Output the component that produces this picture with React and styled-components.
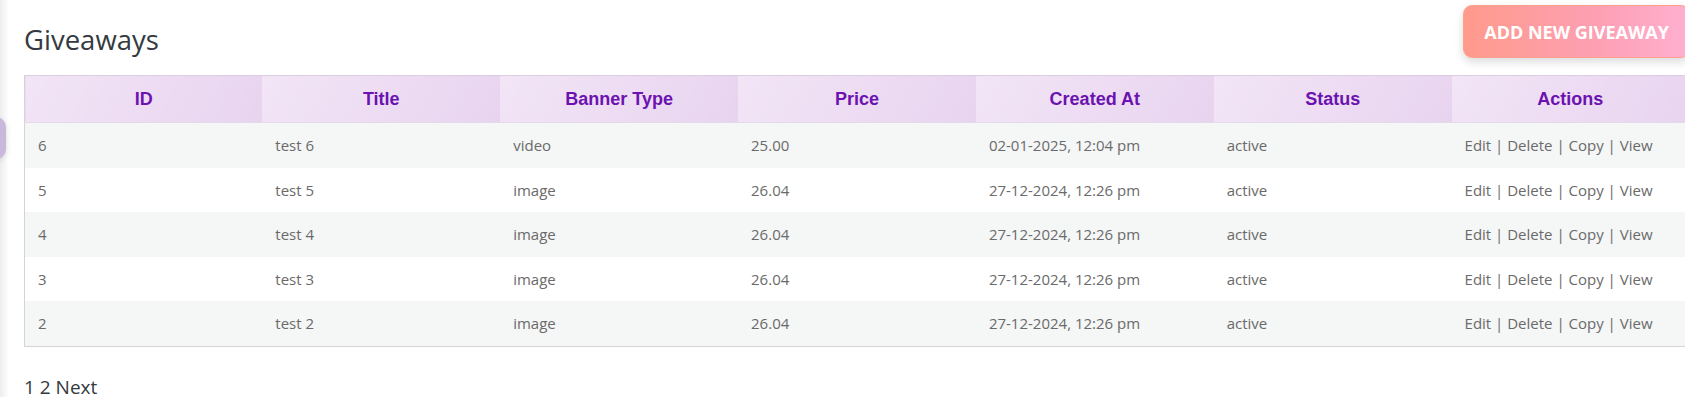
import React from "react";
import styled, { createGlobalStyle } from "styled-components";

const GlobalStyle = createGlobalStyle`
  html, body {
    margin: 0;
    padding: 0;
    background: #fff;
    overflow: hidden;
  }
  body {
    font-family: "Open Sans", "Noto Sans", sans-serif;
  }
`;

const EdgeShadow = styled.div`
  position: fixed;
  left: 0;
  top: 0;
  bottom: 0;
  width: 9px;
  background: linear-gradient(90deg, rgba(0, 0, 0, 0.07), rgba(0, 0, 0, 0));
`;

const SideTab = styled.div`
  position: fixed;
  left: -30px;
  top: 117px;
  width: 36px;
  height: 42px;
  border-radius: 10px;
  background: #c8b8db;
  box-shadow: 0 2px 6px rgba(0, 0, 0, 0.12);
`;

const Page = styled.div`
  width: 1666px;
  padding: 5px 0 0 24px;
`;

const TopBar = styled.div`
  display: flex;
  justify-content: space-between;
  align-items: flex-start;
  height: 70px;
`;

const Title = styled.h1`
  margin: 18px 0 0;
  font-size: 27.5px;
  line-height: 1.2;
  font-weight: 400;
  color: #343a40;
`;

const AddButton = styled.button`
  height: 53px;
  padding: 0 20px;
  border: 1px solid #ffa08e;
  border-radius: 9px;
  background: linear-gradient(90deg, #ff9a8b, #fda0b4 60%, #ffb0d0);
  box-shadow: 0 4px 10px rgba(0, 0, 0, 0.14);
  color: #fff;
  font-family: "Open Sans", sans-serif;
  font-weight: 700;
  font-size: 18px;
  text-transform: uppercase;
  cursor: pointer;
`;

const Table = styled.table`
  width: 1666px;
  table-layout: fixed;
  border-collapse: collapse;
  border: 1px solid #d4d4d4;
`;

const HeadCell = styled.th`
  height: 46px;
  padding: 0 13px;
  background: linear-gradient(120deg, #f2e5f6, #e8d3ef);
  border-top: 1px solid #dacfe0;
  border-bottom: 1px solid #e3dbe7;
  color: #6b12b0;
  font-family: "Liberation Sans", Arial, sans-serif;
  font-weight: 700;
  font-size: 18px;
  text-align: center;
`;

const Row = styled.tr`
  background: ${(p) => (p.$striped ? "#f5f6f6" : "#ffffff")};
`;

const Cell = styled.td`
  height: 44.5px;
  padding: 0 13px;
  color: #6a6a6a;
  font-size: 15px;
  text-align: left;
  white-space: nowrap;
`;

const Pager = styled.div`
  margin-top: 31px;
  font-size: 19px;
  line-height: 1;
  color: #343a40;
`;

const columns = ["ID", "Title", "Banner Type", "Price", "Created At", "Status", "Actions"];

const rows = [
  { id: 6, title: "test 6", type: "video", price: "25.00", created: "02-01-2025, 12:04 pm" },
  { id: 5, title: "test 5", type: "image", price: "26.04", created: "27-12-2024, 12:26 pm" },
  { id: 4, title: "test 4", type: "image", price: "26.04", created: "27-12-2024, 12:26 pm" },
  { id: 3, title: "test 3", type: "image", price: "26.04", created: "27-12-2024, 12:26 pm" },
  { id: 2, title: "test 2", type: "image", price: "26.04", created: "27-12-2024, 12:26 pm" },
];

export default function App() {
  return (
    <>
      <GlobalStyle />
      <EdgeShadow />
      <SideTab />
      <Page>
        <TopBar>
          <Title>Giveaways</Title>
          <AddButton>Add New Giveaway</AddButton>
        </TopBar>
        <Table>
          <thead>
            <tr>
              {columns.map((c) => (
                <HeadCell key={c}>{c}</HeadCell>
              ))}
            </tr>
          </thead>
          <tbody>
            {rows.map((r, i) => (
              <Row key={r.id} $striped={i % 2 === 0}>
                <Cell>{r.id}</Cell>
                <Cell>{r.title}</Cell>
                <Cell>{r.type}</Cell>
                <Cell>{r.price}</Cell>
                <Cell>{r.created}</Cell>
                <Cell>active</Cell>
                <Cell>Edit | Delete | Copy | View</Cell>
              </Row>
            ))}
          </tbody>
        </Table>
        <Pager>1 2 Next</Pager>
      </Page>
    </>
  );
}
